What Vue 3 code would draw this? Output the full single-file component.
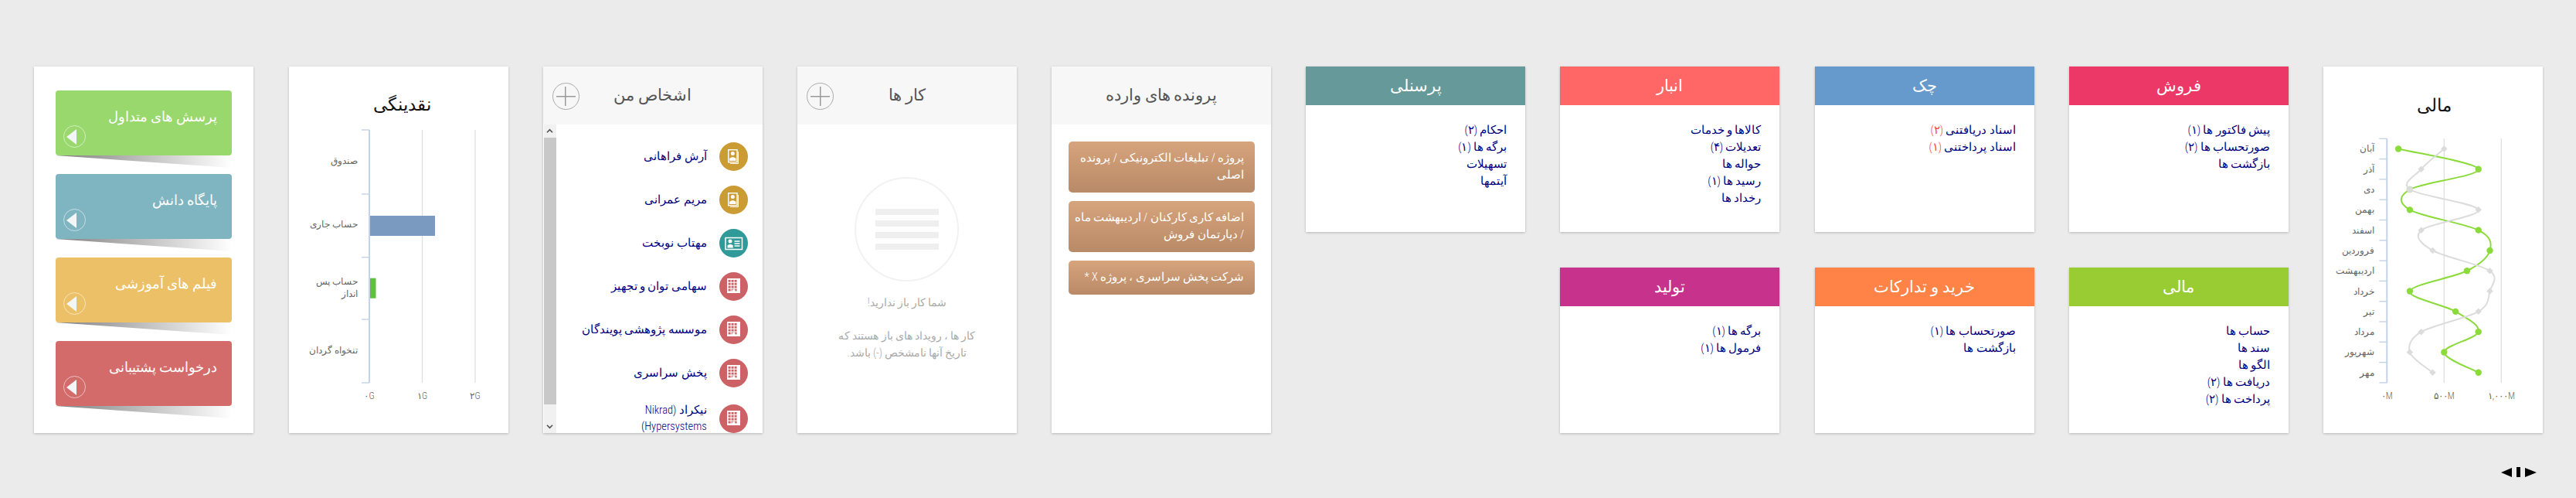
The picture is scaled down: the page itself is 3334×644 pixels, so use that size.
<script setup>
// داشبورد صفحه اصلی: همه داده ها ثابت هستند
const links = [
  { title: 'پرسش های متداول', color: '#99d86c' },
  { title: 'پایگاه دانش', color: '#7fb5c1' },
  { title: 'فیلم های آموزشی', color: '#ecc066' },
  { title: 'درخواست پشتیبانی', color: '#d46b6b' },
]

const people = [
  { name: 'آرش فراهانی', type: 'contact' },
  { name: 'مریم عمرانی', type: 'contact' },
  { name: 'مهتاب نوبخت', type: 'card' },
  { name: 'سهامی توان و تجهیز', type: 'company' },
  { name: 'موسسه پژوهشی پویندگان', type: 'company' },
  { name: 'پخش سراسری', type: 'company' },
  { name: 'نیکراد (Nikrad\nHypersystems)', type: 'company' },
]

const files = [
  'پروژه / تبلیغات الکترونیکی / پرونده اصلی',
  'اضافه کاری کارکنان / اردیبهشت ماه / دپارتمان فروش',
  'شرکت پخش سراسری ، پروژه X *',
]

const columns = [
  [
    { title: 'فروش', color: '#ec3866', items: [['پیش فاکتور ها', '(۱)'], ['صورتحساب ها', '(۲)'], ['بازگشت ها']] },
    { title: 'مالی', color: '#99cc33', items: [['حساب ها'], ['سند ها'], ['الگو ها'], ['دریافت ها', '(۲)'], ['پرداخت ها', '(۲)']] },
  ],
  [
    { title: 'چک', color: '#6699cc', alert: true, items: [['اسناد دریافتنی', '(۲)'], ['اسناد پرداختنی', '(۱)']] },
    { title: 'خرید و تدارکات', color: '#ff8247', items: [['صورتحساب ها', '(۱)'], ['بازگشت ها']] },
  ],
  [
    { title: 'انبار', color: '#ff6666', items: [['کالاها و خدمات'], ['تعدیلات', '(۴)'], ['حواله ها'], ['رسید ها', '(۱)'], ['رخداد ها']] },
    { title: 'تولید', color: '#c7338c', items: [['برگه ها', '(۱)'], ['فرمول ها', '(۱)']] },
  ],
  [
    { title: 'پرسنلی', color: '#669999', items: [['احکام', '(۲)'], ['برگه ها', '(۱)'], ['تسهیلات'], ['آیتمها']] },
  ],
]

// نمودار مالی: مقادیر به میلیون
const months = ['آبان', 'آذر', 'دی', 'بهمن', 'اسفند', 'فروردین', 'اردیبهشت', 'خرداد', 'تیر', 'مرداد', 'شهریور', 'مهر']
const income = [100, 800, 200, 200, 800, 900, 700, 200, 600, 800, 500, 800]
const expense = [500, 300, 200, 800, 300, 400, 900, 900, 800, 300, 200, 400]

const AXIS_X = 82.3
const TOP_Y = 93.3
const ROW_H = 26.3

const toX = (v) => AXIS_X + v * 0.148
const toY = (i) => TOP_Y + ROW_H * (i + 0.5)

function points(values) {
  return values.map((v, i) => ({ x: toX(v), y: toY(i) }))
}

// منحنی Catmull-Rom برای خطوط نرم
function smooth(pts) {
  let d = `M${pts[0].x} ${pts[0].y}`
  for (let i = 0; i < pts.length - 1; i++) {
    const p0 = pts[Math.max(i - 1, 0)]
    const p1 = pts[i]
    const p2 = pts[i + 1]
    const p3 = pts[Math.min(i + 2, pts.length - 1)]
    const c1x = p1.x + (p2.x - p0.x) / 6
    const c1y = p1.y + (p2.y - p0.y) / 6
    const c2x = p2.x - (p3.x - p1.x) / 6
    const c2y = p2.y - (p3.y - p1.y) / 6
    d += ` C${c1x} ${c1y} ${c2x} ${c2y} ${p2.x} ${p2.y}`
  }
  return d
}

const incomePts = points(income)
const expensePts = points(expense)
const incomePath = smooth(incomePts)
const expensePath = smooth(expensePts)
const ticks = Array.from({ length: 13 }, (_, i) => TOP_Y + ROW_H * i)

const liquidityLabels = [
  { y: 126, lines: ['صندوق'] },
  { y: 208, lines: ['حساب جاری'] },
  { y: 282, lines: ['حساب پس'] },
  { y: 298, lines: ['انداز'] },
  { y: 371, lines: ['تنخواه گردان'] },
]
</script>

<template>
  <div class="page">
    <div class="board" dir="rtl">
      <!-- نمودار مالی -->
      <section class="panel">
        <svg class="chart" viewBox="0 0 284 474" width="284" height="474">
          <text class="chart-title" x="143.5" y="58" text-anchor="middle">مالی</text>
          <line v-for="v in [500, 1000]" :key="v" :x1="toX(v)" :x2="toX(v)" :y1="TOP_Y" :y2="409" class="grid" />
          <line :x1="AXIS_X" :x2="AXIS_X" :y1="TOP_Y" :y2="409" class="axis" />
          <line v-for="t in ticks" :key="t" :x1="AXIS_X - 10" :x2="AXIS_X" :y1="t" :y2="t" class="tick" />
          <text v-for="(m, i) in months" :key="m" class="label" :x="AXIS_X - 16" :y="toY(i) + 4" text-anchor="end">{{ m }}</text>
          <text class="label" :x="AXIS_X" y="430" text-anchor="middle">۰M</text>
          <text class="label" :x="toX(500)" y="430" text-anchor="middle">۵۰۰M</text>
          <text class="label" :x="toX(1000)" y="430" text-anchor="middle">۱,۰۰۰M</text>
          <path :d="incomePath" class="line line--green" />
          <circle v-for="p in incomePts" :key="p.y" :cx="p.x" :cy="p.y" r="4.2" fill="#8bdb3b" />
          <path :d="expensePath" class="line line--gray" />
          <rect
            v-for="p in expensePts"
            :key="p.y"
            :x="p.x - 3"
            :y="p.y - 3"
            width="6"
            height="6"
            fill="#dcdcdc"
            :transform="`rotate(45 ${p.x} ${p.y})`"
          />
          <circle :cx="toX(200)" :cy="toY(2)" r="4" fill="#dcdcdc" />
        </svg>
      </section>

      <!-- کارت های ماژول ها -->
      <div v-for="(col, c) in columns" :key="c" class="stack">
        <section v-for="card in col" :key="card.title" class="panel module">
          <h2 class="module__head" :style="{ background: card.color }">{{ card.title }}</h2>
          <ul class="module__list">
            <li v-for="item in card.items" :key="item[0]">
              {{ item[0] }}
              <span v-if="item[1]" :class="{ 'is-alert': card.alert }">{{ item[1] }}</span>
            </li>
          </ul>
        </section>
      </div>

      <!-- پرونده های وارده -->
      <section class="panel">
        <h2 class="panel__head">پرونده های وارده</h2>
        <div class="files">
          <div v-for="file in files" :key="file" class="file">{{ file }}</div>
        </div>
      </section>

      <!-- کارها -->
      <section class="panel">
        <h2 class="panel__head">
          <span class="plus"></span>
          کار ها
        </h2>
        <div class="empty">
          <div class="empty__circle">
            <i></i><i></i><i></i><i></i>
          </div>
          <p class="empty__title">شما کار باز ندارید!</p>
          <p class="empty__text">کار ها ، رویداد های باز هستند که تاریخ آنها نامشخص (-) باشد.</p>
        </div>
      </section>

      <!-- اشخاص من -->
      <section class="panel panel--people">
        <h2 class="panel__head">
          <span class="plus"></span>
          اشخاص من
        </h2>
        <div class="people">
          <ul class="people__list">
            <li v-for="person in people" :key="person.name" class="person">
              <span class="avatar" :class="`avatar--${person.type}`">
                <svg viewBox="0 0 37 37" width="37" height="37">
                  <template v-if="person.type === 'contact'">
                    <path d="M24.5 12v15.5H14" fill="none" stroke="#fff" stroke-width="1" />
                    <rect x="11.7" y="9.7" width="11.3" height="16" fill="none" stroke="#fff" stroke-width="1.4" />
                    <circle cx="17.3" cy="14.6" r="2.5" fill="#fff" />
                    <path d="M13.2 24v-3.2l2.9-1.5h2.4l3 1.5V24z" fill="#fff" />
                  </template>
                  <template v-else-if="person.type === 'card'">
                    <rect x="8" y="11.5" width="21.5" height="15" fill="none" stroke="#fff" stroke-width="1.5" />
                    <circle cx="14" cy="16" r="2.5" fill="#fff" />
                    <path d="M10.5 24.5v-3.2l2.4-1.3h2.4l2.4 1.3v3.2z" fill="#fff" />
                    <path d="M19.5 16h7M19.5 19h7M19.5 22h7" stroke="#fff" stroke-width="1.4" />
                  </template>
                  <template v-else>
                    <rect x="10" y="8" width="17" height="19" fill="#fff" />
                    <g fill="#cd6266">
                      <template v-for="r in 4" :key="r">
                        <rect v-for="k in 3" :key="k" :x="7.6 + k * 4" :y="6 + r * 3.9" width="3" height="2.8" />
                      </template>
                    </g>
                    <rect x="16.6" y="22.5" width="3.8" height="4.5" fill="#fff" />
                  </template>
                </svg>
              </span>
              <span class="person__name">{{ person.name }}</span>
            </li>
          </ul>
          <div class="scrollbar" aria-hidden="true">
            <span class="scrollbar__btn">
              <svg viewBox="0 0 10 8" width="9" height="7"><path d="M1 6l4-4 4 4" fill="none" stroke="#555" stroke-width="2" /></svg>
            </span>
            <span class="scrollbar__thumb"></span>
            <span class="scrollbar__btn scrollbar__btn--end">
              <svg viewBox="0 0 10 8" width="9" height="7"><path d="M1 2l4 4 4-4" fill="none" stroke="#555" stroke-width="2" /></svg>
            </span>
          </div>
        </div>
      </section>

      <!-- نقدینگی -->
      <section class="panel">
        <svg class="chart" viewBox="0 0 284 474" width="284" height="474">
          <text class="chart-title" x="146" y="57" text-anchor="middle">نقدینگی</text>
          <line v-for="x in [172.5, 241]" :key="x" :x1="x" :x2="x" y1="82" y2="409" class="grid" />
          <line x1="104" x2="104" y1="82" y2="409" class="axis" />
          <line v-for="y in [82, 165, 246.7, 327, 409]" :key="y" x1="94" x2="104" :y1="y" :y2="y" class="tick" />
          <rect x="105" y="193" width="84" height="26" fill="#7a9abf" />
          <rect x="105" y="273.7" width="7.5" height="26" fill="#5fbf3f" />
          <template v-for="row in liquidityLabels" :key="row.y">
            <text v-for="line in row.lines" :key="line" class="label" x="89" :y="row.y" text-anchor="end">{{ line }}</text>
          </template>
          <text class="label" x="104" y="430" text-anchor="middle">۰G</text>
          <text class="label" x="172.5" y="430" text-anchor="middle">۱G</text>
          <text class="label" x="241" y="430" text-anchor="middle">۲G</text>
        </svg>
      </section>

      <!-- لینک ها -->
      <section class="panel links">
        <a v-for="link in links" :key="link.title" class="link" :style="{ background: link.color }">
          <span class="link__title">{{ link.title }}</span>
          <span class="link__arrow"></span>
        </a>
      </section>
    </div>

    <div class="pager" aria-hidden="true">
      <span class="pager__next"></span>
      <span class="pager__bar"></span>
      <span class="pager__prev"></span>
    </div>
  </div>
</template>

<style scoped>
.page {
  width: 3334px;
  height: 644px;
  box-sizing: border-box;
  padding-top: 86px;
  background: #ebebeb;
  font-family: Roboto, "DejaVu Sans", sans-serif;
  font-stretch: condensed;
  font-weight: 300;
  overflow: hidden;
}

.board {
  display: flex;
  gap: 45.2px;
  padding-right: 43px;
  height: 474px;
}

.panel {
  width: 284px;
  height: 474px;
  flex: none;
  background: #fff;
  box-shadow: 0 1px 3px rgba(0, 0, 0, 0.22);
  overflow: hidden;
}

.panel__head {
  position: relative;
  height: 75px;
  margin: 0;
  background: #f7f7f7;
  color: #555;
  font-size: 21px;
  font-weight: 300;
  line-height: 75px;
  text-align: center;
}

.plus {
  position: absolute;
  left: 12px;
  top: 21px;
  width: 35px;
  height: 35px;
  box-sizing: border-box;
  border: 1.5px solid #aaa;
  border-radius: 50%;
  background:
    linear-gradient(#999, #999) center / 25px 1.5px no-repeat,
    linear-gradient(#999, #999) center / 1.5px 25px no-repeat;
}

/* نمودارها */
.chart {
  display: block;
  direction: ltr;
}
.chart-title {
  font-size: 23px;
  fill: #111;
}
.label {
  font-size: 12px;
  fill: #666;
}
.grid {
  stroke: #dedede;
  stroke-width: 1.2;
}
.axis {
  stroke: #c5d3e6;
  stroke-width: 2;
}
.tick {
  stroke: #c5d3e6;
  stroke-width: 1.4;
}
.line {
  fill: none;
  stroke-width: 2;
}
.line--green {
  stroke: #8bdb3b;
}
.line--gray {
  stroke: #dcdcdc;
}

/* کارت های ماژول */
.stack {
  display: flex;
  flex-direction: column;
  gap: 46px;
  flex: none;
}
.module {
  height: 214px;
}
.module__head {
  height: 50px;
  margin: 0;
  color: #fff;
  font-size: 21px;
  font-weight: 300;
  line-height: 50px;
  text-align: center;
}
.module__list {
  margin: 0;
  padding: 22px 24px 0 0;
  list-style: none;
  color: #000080;
  font-size: 14.5px;
  line-height: 22px;
}
.is-alert {
  color: #f44;
}

/* پرونده ها */
.files {
  display: flex;
  flex-direction: column;
  gap: 11px;
  padding: 22px 21.5px;
}
.file {
  padding: 11px 13.5px 11px 8px;
  border-radius: 5px;
  background: linear-gradient(#d6a47c, #b98a68);
  color: #fff;
  font-size: 14.5px;
  line-height: 22px;
}

/* کارها */
.empty {
  display: flex;
  flex-direction: column;
  align-items: center;
  padding-top: 68px;
  color: #aaa;
  text-align: center;
}
.empty__circle {
  display: flex;
  flex-direction: column;
  justify-content: center;
  gap: 6.5px;
  align-items: center;
  width: 135px;
  height: 135px;
  box-sizing: border-box;
  border: 2.5px solid #f2f2f2;
  border-radius: 50%;
}
.empty__circle i {
  display: block;
  width: 82px;
  height: 8.5px;
  background: #efefef;
}
.empty__title {
  margin: 16px 0 0;
  font-size: 14px;
  line-height: 22px;
}
.empty__text {
  width: 190px;
  margin: 21px 0 0;
  font-size: 14px;
  line-height: 22px;
}

/* اشخاص */
.people {
  display: flex;
  height: 399px;
  overflow: hidden;
}
.people__list {
  flex: 1;
  display: flex;
  flex-direction: column;
  gap: 19px;
  margin: 0;
  padding: 23px 19px 0 0;
  list-style: none;
}
.person {
  display: flex;
  align-items: center;
  gap: 16px;
}
.person__name {
  color: #000080;
  font-size: 14.5px;
  line-height: 21px;
  white-space: pre;
}
.avatar {
  display: block;
  flex: none;
  width: 37px;
  height: 37px;
  border-radius: 50%;
}
.avatar svg {
  display: block;
}
.avatar--contact {
  background: #cb9b34;
}
.avatar--card {
  background: #309a98;
}
.avatar--company {
  background: #cd6266;
}
.scrollbar {
  display: flex;
  flex-direction: column;
  flex: none;
  width: 16px;
  margin-left: 1px;
  background: #f1f1f1;
}
.scrollbar__btn {
  display: flex;
  align-items: center;
  justify-content: center;
  height: 17px;
}
.scrollbar__btn--end {
  margin-top: auto;
  padding-top: 15px;
}
.scrollbar__thumb {
  height: 345px;
  background: #c8c8c8;
}

/* لینک ها */
.links {
  display: flex;
  flex-direction: column;
  gap: 24px;
  box-sizing: border-box;
  padding: 31px 28.5px 0 27.5px;
}
.link {
  position: relative;
  display: flex;
  flex-direction: column;
  justify-content: space-between;
  height: 84px;
  box-sizing: border-box;
  padding: 23px 19px 10px 10px;
  border-radius: 4px;
}
/* سایه مورب زیر هر کارت */
.link::after {
  content: "";
  position: absolute;
  left: 0;
  right: 0;
  top: 100%;
  height: 16px;
  background: linear-gradient(to right, #808080, #fff);
  clip-path: polygon(0 0, 100% 0, 100% 100%);
}
.link__title {
  color: #fff;
  font-size: 18px;
  line-height: 22px;
}
.link__arrow {
  position: relative;
  align-self: flex-end;
  width: 29px;
  height: 29px;
  box-sizing: border-box;
  border: 1.5px solid rgba(255, 255, 255, 0.55);
  border-radius: 50%;
}
.link__arrow::before {
  content: "";
  position: absolute;
  left: 3.5px;
  top: 3.5px;
  border-style: solid;
  border-width: 10px 13px 10px 0;
  border-color: transparent #f3f5f7 transparent transparent;
}

/* صفحه بندی پایین */
.pager {
  display: flex;
  align-items: center;
  justify-content: flex-end;
  gap: 6px;
  height: 13px;
  margin-top: 44px;
  padding-right: 51px;
}
.pager span {
  display: block;
}
.pager__next {
  border-style: solid;
  border-width: 6.5px 14px 6.5px 0;
  border-color: transparent #000 transparent transparent;
}
.pager__prev {
  border-style: solid;
  border-width: 6.5px 0 6.5px 15px;
  border-color: transparent transparent transparent #000;
}
.pager__bar {
  width: 5px;
  height: 13px;
  background: #000;
}
</style>

<style>
html,
body {
  margin: 0;
  background: #ebebeb;
}
</style>
